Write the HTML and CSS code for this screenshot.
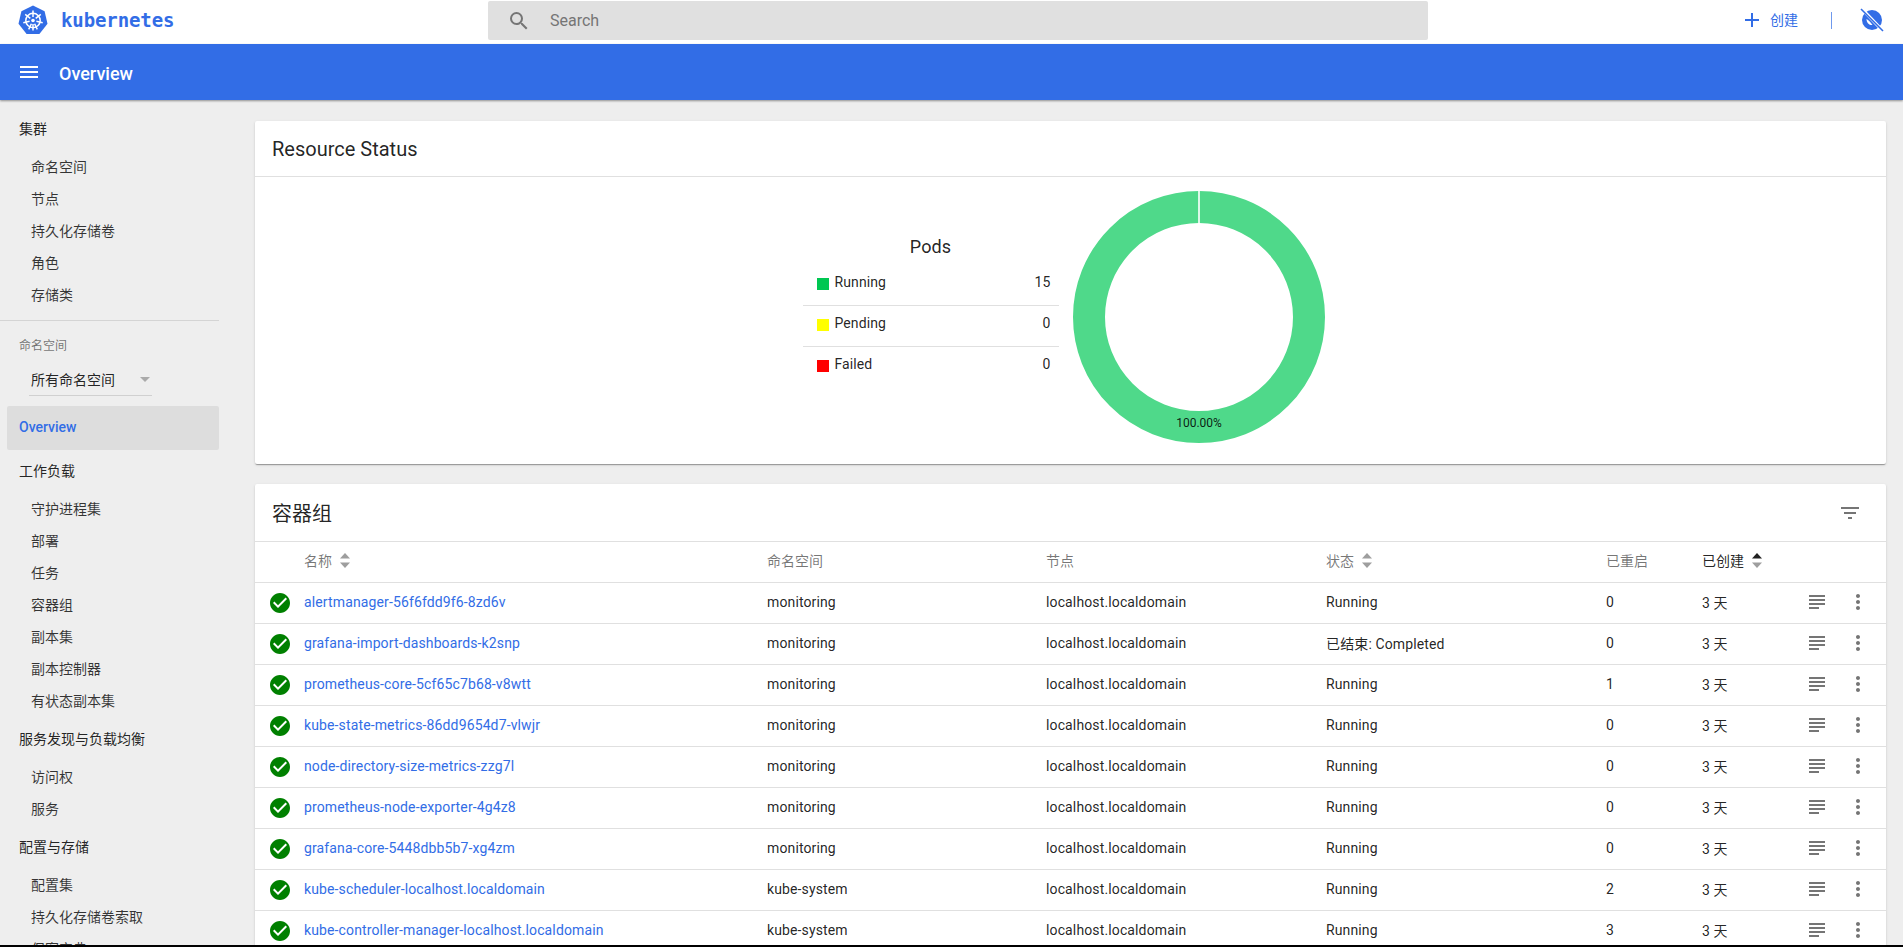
FILE: index.html
```html
<!DOCTYPE html>
<html lang="zh">
<head>
<meta charset="utf-8">
<title>Overview - Kubernetes Dashboard</title>
<link rel="stylesheet" href="styles.css">
</head>
<body>
<div class="page">
  <header class="toolbar">
    <div class="brand">
      <svg class="logo" viewBox="0 0 30 30" width="30" height="30">
        <path class="logo-hept" d="M15 .6 26.6 6.200 29.500 18.800 21.400 28.900H8.600L.5 18.800 3.400 6.200Z"/>
        <g class="logo-wheel">
          <circle cx="15" cy="15.500" r="7.200"/>
          <path d="M15 5.500V12M15 19V25.500M7.200 9.300 12.300 13.300M22.800 9.300 17.700 13.300M5.300 17.700 11.600 16.200M24.700 17.700 18.400 16.200M10.700 24.400 13.400 18.700M19.300 24.400 16.600 18.700"/>
          <circle class="logo-hub" cx="15" cy="15.500" r="1.800"/>
        </g>
      </svg>
      <span class="brand-name">kubernetes</span>
    </div>
    <div class="search">
      <svg class="icon search-icon" viewBox="0 0 24 24"><path d="M15.500 14h-.79l-.28-.27A6.470 6.470 0 0 0 16 9.500 6.500 6.500 0 1 0 9.500 16c1.610 0 3.090-.59 4.230-1.570l.27.28v.79l5 4.990L20.490 19l-4.990-5zm-6 0C7.010 14 5 11.990 5 9.500S7.010 5 9.500 5 14 7.010 14 9.500 11.990 14 9.500 14z"/></svg>
      <span class="search-text">Search</span>
    </div>
    <div class="actions">
      <svg class="icon plus-icon" viewBox="0 0 24 24"><path d="M19 13h-6v6h-2v-6H5v-2h6V5h2v6h6v2z"/></svg>
      <span class="create">创建</span>
      <span class="vdivider"></span>
      <svg class="icon avatar-icon" viewBox="0 0 24 24">
        <circle class="avatar-disc" cx="12" cy="12" r="10"/>
        <path class="avatar-cut" d="M6.500 11C8.500 12 11 14.500 12.500 17 9.500 17.500 6.500 15 6.500 11Z"/>
        <path class="avatar-halo" d="M2 1 23 23"/>
        <path class="avatar-strike" d="M1 1 23 23"/>
      </svg>
    </div>
  </header>
  <div class="titlebar">
    <svg class="icon menu-icon" viewBox="0 0 24 24"><path d="M3 18h18v-2H3v2zm0-5h18v-2H3v2zm0-7v2h18V6H3z"/></svg>
    <span class="page-title">Overview</span>
  </div>
  <div class="main">
    <nav class="sidebar">
      <div class="nav-title">集群</div>
      <div class="nav-item">命名空间</div>
      <div class="nav-item">节点</div>
      <div class="nav-item">持久化存储卷</div>
      <div class="nav-item">角色</div>
      <div class="nav-item">存储类</div>
      <div class="nav-divider"></div>
      <div class="ns-label">命名空间</div>
      <div class="ns-select"><span>所有命名空间</span><span class="ns-arrow"></span></div>
      <div class="nav-active">Overview</div>
      <div class="nav-title nav-title-first">工作负载</div>
      <div class="nav-item">守护进程集</div>
      <div class="nav-item">部署</div>
      <div class="nav-item">任务</div>
      <div class="nav-item">容器组</div>
      <div class="nav-item">副本集</div>
      <div class="nav-item">副本控制器</div>
      <div class="nav-item">有状态副本集</div>
      <div class="nav-title">服务发现与负载均衡</div>
      <div class="nav-item">访问权</div>
      <div class="nav-item">服务</div>
      <div class="nav-title">配置与存储</div>
      <div class="nav-item">配置集</div>
      <div class="nav-item">持久化存储卷索取</div>
      <div class="nav-item">保密字典</div>
    </nav>
    <main class="content">
      <section class="card">
        <div class="card-head"><h2 class="card-title">Resource Status</h2></div>
        <div class="chart-area">
          <div class="legend">
            <div class="legend-title">Pods</div>
            <div class="legend-row legend-first"><span class="swatch swatch-run"></span><span class="legend-label">Running</span><span>15</span></div>
            <div class="legend-row"><span class="swatch swatch-pend"></span><span class="legend-label">Pending</span><span>0</span></div>
            <div class="legend-row legend-last"><span class="swatch swatch-fail"></span><span class="legend-label">Failed</span><span>0</span></div>
          </div>
          <svg class="donut" viewBox="0 0 252 252" width="252" height="252">
            <circle class="donut-ring" cx="126" cy="126" r="110"/>
            <rect class="donut-gap" x="125.200" y="0" width="1.600" height="33"/>
            <text class="donut-label" x="126" y="236" text-anchor="middle">100.00%</text>
          </svg>
        </div>
      </section>
      <section class="card card-pods">
        <div class="card-head card-head-between">
          <h2 class="card-title">容器组</h2>
          <svg class="icon filter-icon" viewBox="0 0 24 24"><path d="M10 18h4v-2h-4v2zM3 6v2h18V6H3zm3 7h12v-2H6v2z"/></svg>
        </div>
        <div class="row row-head">
          <span></span>
          <span class="th">名称<svg class="sort" viewBox="0 0 10 15"><path d="M5 0 10 5.500H0Z"/><path d="M5 15 0 9.500H10Z"/></svg></span>
          <span class="th">命名空间</span>
          <span class="th">节点</span>
          <span class="th">状态<svg class="sort" viewBox="0 0 10 15"><path d="M5 0 10 5.500H0Z"/><path d="M5 15 0 9.500H10Z"/></svg></span>
          <span class="th">已重启</span>
          <span class="th th-on">已创建<svg class="sort sort-up" viewBox="0 0 10 15"><path class="sort-active" d="M5 0 10 5.500H0Z"/><path d="M5 15 0 9.500H10Z"/></svg></span>
          <span></span><span></span>
        </div>
        <div class="row"><svg class="check" viewBox="0 0 24 24"><path d="M12 2C6.480 2 2 6.480 2 12s4.480 10 10 10 10-4.480 10-10S17.520 2 12 2zm-2 15l-5-5 1.410-1.410L10 14.170l7.590-7.590L19 8l-9 9z"/></svg><a class="link">alertmanager-56f6fdd9f6-8zd6v</a><span>monitoring</span><span>localhost.localdomain</span><span>Running</span><span>0</span><span>3 天</span><svg class="icon logs" viewBox="0 0 24 24"><path d="M14 17H4v2h10v-2zm6-8H4v2h16V9zM4 15h16v-2H4v2zM4 5v2h16V5H4z"/></svg><svg class="icon more" viewBox="0 0 24 24"><path d="M12 8c1.100 0 2-.9 2-2s-.9-2-2-2-2 .9-2 2 .9 2 2 2zm0 2c-1.100 0-2 .9-2 2s.9 2 2 2 2-.9 2-2-.9-2-2-2zm0 6c-1.100 0-2 .9-2 2s.9 2 2 2 2-.9 2-2-.9-2-2-2z"/></svg></div>
        <div class="row"><svg class="check" viewBox="0 0 24 24"><path d="M12 2C6.480 2 2 6.480 2 12s4.480 10 10 10 10-4.480 10-10S17.520 2 12 2zm-2 15l-5-5 1.410-1.410L10 14.170l7.590-7.590L19 8l-9 9z"/></svg><a class="link">grafana-import-dashboards-k2snp</a><span>monitoring</span><span>localhost.localdomain</span><span>已结束: Completed</span><span>0</span><span>3 天</span><svg class="icon logs" viewBox="0 0 24 24"><path d="M14 17H4v2h10v-2zm6-8H4v2h16V9zM4 15h16v-2H4v2zM4 5v2h16V5H4z"/></svg><svg class="icon more" viewBox="0 0 24 24"><path d="M12 8c1.100 0 2-.9 2-2s-.9-2-2-2-2 .9-2 2 .9 2 2 2zm0 2c-1.100 0-2 .9-2 2s.9 2 2 2 2-.9 2-2-.9-2-2-2zm0 6c-1.100 0-2 .9-2 2s.9 2 2 2 2-.9 2-2-.9-2-2-2z"/></svg></div>
        <div class="row"><svg class="check" viewBox="0 0 24 24"><path d="M12 2C6.480 2 2 6.480 2 12s4.480 10 10 10 10-4.480 10-10S17.520 2 12 2zm-2 15l-5-5 1.410-1.410L10 14.170l7.590-7.590L19 8l-9 9z"/></svg><a class="link">prometheus-core-5cf65c7b68-v8wtt</a><span>monitoring</span><span>localhost.localdomain</span><span>Running</span><span>1</span><span>3 天</span><svg class="icon logs" viewBox="0 0 24 24"><path d="M14 17H4v2h10v-2zm6-8H4v2h16V9zM4 15h16v-2H4v2zM4 5v2h16V5H4z"/></svg><svg class="icon more" viewBox="0 0 24 24"><path d="M12 8c1.100 0 2-.9 2-2s-.9-2-2-2-2 .9-2 2 .9 2 2 2zm0 2c-1.100 0-2 .9-2 2s.9 2 2 2 2-.9 2-2-.9-2-2-2zm0 6c-1.100 0-2 .9-2 2s.9 2 2 2 2-.9 2-2-.9-2-2-2z"/></svg></div>
        <div class="row"><svg class="check" viewBox="0 0 24 24"><path d="M12 2C6.480 2 2 6.480 2 12s4.480 10 10 10 10-4.480 10-10S17.520 2 12 2zm-2 15l-5-5 1.410-1.410L10 14.170l7.590-7.590L19 8l-9 9z"/></svg><a class="link">kube-state-metrics-86dd9654d7-vlwjr</a><span>monitoring</span><span>localhost.localdomain</span><span>Running</span><span>0</span><span>3 天</span><svg class="icon logs" viewBox="0 0 24 24"><path d="M14 17H4v2h10v-2zm6-8H4v2h16V9zM4 15h16v-2H4v2zM4 5v2h16V5H4z"/></svg><svg class="icon more" viewBox="0 0 24 24"><path d="M12 8c1.100 0 2-.9 2-2s-.9-2-2-2-2 .9-2 2 .9 2 2 2zm0 2c-1.100 0-2 .9-2 2s.9 2 2 2 2-.9 2-2-.9-2-2-2zm0 6c-1.100 0-2 .9-2 2s.9 2 2 2 2-.9 2-2-.9-2-2-2z"/></svg></div>
        <div class="row"><svg class="check" viewBox="0 0 24 24"><path d="M12 2C6.480 2 2 6.480 2 12s4.480 10 10 10 10-4.480 10-10S17.520 2 12 2zm-2 15l-5-5 1.410-1.410L10 14.170l7.590-7.590L19 8l-9 9z"/></svg><a class="link">node-directory-size-metrics-zzg7l</a><span>monitoring</span><span>localhost.localdomain</span><span>Running</span><span>0</span><span>3 天</span><svg class="icon logs" viewBox="0 0 24 24"><path d="M14 17H4v2h10v-2zm6-8H4v2h16V9zM4 15h16v-2H4v2zM4 5v2h16V5H4z"/></svg><svg class="icon more" viewBox="0 0 24 24"><path d="M12 8c1.100 0 2-.9 2-2s-.9-2-2-2-2 .9-2 2 .9 2 2 2zm0 2c-1.100 0-2 .9-2 2s.9 2 2 2 2-.9 2-2-.9-2-2-2zm0 6c-1.100 0-2 .9-2 2s.9 2 2 2 2-.9 2-2-.9-2-2-2z"/></svg></div>
        <div class="row"><svg class="check" viewBox="0 0 24 24"><path d="M12 2C6.480 2 2 6.480 2 12s4.480 10 10 10 10-4.480 10-10S17.520 2 12 2zm-2 15l-5-5 1.410-1.410L10 14.170l7.590-7.590L19 8l-9 9z"/></svg><a class="link">prometheus-node-exporter-4g4z8</a><span>monitoring</span><span>localhost.localdomain</span><span>Running</span><span>0</span><span>3 天</span><svg class="icon logs" viewBox="0 0 24 24"><path d="M14 17H4v2h10v-2zm6-8H4v2h16V9zM4 15h16v-2H4v2zM4 5v2h16V5H4z"/></svg><svg class="icon more" viewBox="0 0 24 24"><path d="M12 8c1.100 0 2-.9 2-2s-.9-2-2-2-2 .9-2 2 .9 2 2 2zm0 2c-1.100 0-2 .9-2 2s.9 2 2 2 2-.9 2-2-.9-2-2-2zm0 6c-1.100 0-2 .9-2 2s.9 2 2 2 2-.9 2-2-.9-2-2-2z"/></svg></div>
        <div class="row"><svg class="check" viewBox="0 0 24 24"><path d="M12 2C6.480 2 2 6.480 2 12s4.480 10 10 10 10-4.480 10-10S17.520 2 12 2zm-2 15l-5-5 1.410-1.410L10 14.170l7.590-7.590L19 8l-9 9z"/></svg><a class="link">grafana-core-5448dbb5b7-xg4zm</a><span>monitoring</span><span>localhost.localdomain</span><span>Running</span><span>0</span><span>3 天</span><svg class="icon logs" viewBox="0 0 24 24"><path d="M14 17H4v2h10v-2zm6-8H4v2h16V9zM4 15h16v-2H4v2zM4 5v2h16V5H4z"/></svg><svg class="icon more" viewBox="0 0 24 24"><path d="M12 8c1.100 0 2-.9 2-2s-.9-2-2-2-2 .9-2 2 .9 2 2 2zm0 2c-1.100 0-2 .9-2 2s.9 2 2 2 2-.9 2-2-.9-2-2-2zm0 6c-1.100 0-2 .9-2 2s.9 2 2 2 2-.9 2-2-.9-2-2-2z"/></svg></div>
        <div class="row"><svg class="check" viewBox="0 0 24 24"><path d="M12 2C6.480 2 2 6.480 2 12s4.480 10 10 10 10-4.480 10-10S17.520 2 12 2zm-2 15l-5-5 1.410-1.410L10 14.170l7.590-7.590L19 8l-9 9z"/></svg><a class="link">kube-scheduler-localhost.localdomain</a><span>kube-system</span><span>localhost.localdomain</span><span>Running</span><span>2</span><span>3 天</span><svg class="icon logs" viewBox="0 0 24 24"><path d="M14 17H4v2h10v-2zm6-8H4v2h16V9zM4 15h16v-2H4v2zM4 5v2h16V5H4z"/></svg><svg class="icon more" viewBox="0 0 24 24"><path d="M12 8c1.100 0 2-.9 2-2s-.9-2-2-2-2 .9-2 2 .9 2 2 2zm0 2c-1.100 0-2 .9-2 2s.9 2 2 2 2-.9 2-2-.9-2-2-2zm0 6c-1.100 0-2 .9-2 2s.9 2 2 2 2-.9 2-2-.9-2-2-2z"/></svg></div>
        <div class="row"><svg class="check" viewBox="0 0 24 24"><path d="M12 2C6.480 2 2 6.480 2 12s4.480 10 10 10 10-4.480 10-10S17.520 2 12 2zm-2 15l-5-5 1.410-1.410L10 14.170l7.590-7.590L19 8l-9 9z"/></svg><a class="link">kube-controller-manager-localhost.localdomain</a><span>kube-system</span><span>localhost.localdomain</span><span>Running</span><span>3</span><span>3 天</span><svg class="icon logs" viewBox="0 0 24 24"><path d="M14 17H4v2h10v-2zm6-8H4v2h16V9zM4 15h16v-2H4v2zM4 5v2h16V5H4z"/></svg><svg class="icon more" viewBox="0 0 24 24"><path d="M12 8c1.100 0 2-.9 2-2s-.9-2-2-2-2 .9-2 2 .9 2 2 2zm0 2c-1.100 0-2 .9-2 2s.9 2 2 2 2-.9 2-2-.9-2-2-2zm0 6c-1.100 0-2 .9-2 2s.9 2 2 2 2-.9 2-2-.9-2-2-2z"/></svg></div>
      </section>
    </main>
  </div>
  <div class="screen-edge"></div>
</div>
</body>
</html>
```
FILE: styles.css
```css
* { box-sizing: border-box; }
html, body { margin: 0; height: 100%; overflow: hidden; }
body {
  font-family: Roboto, "Noto Sans CJK SC", sans-serif;
  font-size: 14px;
  color: rgba(0, 0, 0, .87);
  background: #eee;
}
.page { height: 100vh; display: flex; flex-direction: column; overflow: hidden; }
.icon { display: block; width: 24px; height: 24px; flex: none; fill: #757575; }

/* top toolbar */
.toolbar {
  flex: none;
  height: 44px;
  background: #fff;
  display: grid;
  grid-template-columns: 488px 940px 1fr;
  align-items: start;
}
.brand { display: flex; align-items: center; height: 40px; padding-left: 18px; gap: 13px; }
.logo { flex: none; }
.logo-hept { fill: #326de6; }
.logo-wheel { fill: none; stroke: #fff; stroke-width: 1.5; }
.logo-hub { fill: #fff; stroke: none; }
.brand-name {
  font-family: "DejaVu Sans Mono", monospace;
  font-size: 19px;
  font-weight: 700;
  color: #326de6;
  letter-spacing: -.1px;
}
.search {
  height: 39px;
  margin-top: 1px;
  background: #e0e0e0;
  border-radius: 2px;
  display: flex;
  align-items: center;
  padding-left: 19px;
}
.search-text { margin-left: 19px; font-size: 16px; color: #757575; }
.actions { display: flex; align-items: center; height: 40px; padding-left: 312px; }
.plus-icon, .avatar-icon { fill: #326de6; }
.create { margin: -2px 0 0 6px; color: #326de6; }
.vdivider { width: 1px; height: 17px; margin-left: 33px; background: #326de6; opacity: .7; }
.avatar-icon { margin-left: 28px; }
.avatar-cut { fill: #fff; }
.avatar-halo { stroke: #fff; stroke-width: 3.200; fill: none; }
.avatar-strike { stroke: #326de6; stroke-width: 1.600; fill: none; }

/* blue title bar */
.titlebar {
  flex: none;
  height: 56px;
  background: #326de6;
  display: flex;
  align-items: center;
  padding-left: 17px;
  box-shadow: 0 1px 2px rgba(0, 0, 0, .4);
  position: relative;
  z-index: 1;
}
.menu-icon { fill: #fff; }
.page-title { margin: 2px 0 0 18px; color: #fff; font-size: 18px; font-weight: 500; }

.main { flex: 1; min-height: 0; display: flex; overflow: hidden; }

/* side navigation */
.sidebar { flex: none; width: 240px; padding-top: 13px; overflow: hidden; }
.nav-title { height: 32px; line-height: 32px; padding-left: 19px; margin: 6px 0; }
.sidebar > .nav-title:first-child { margin-top: 0; }
.nav-title-first { margin-top: 5px; }
.nav-item { height: 32px; line-height: 32px; padding-left: 31px; color: rgba(0, 0, 0, .78); }
.nav-divider { width: 219px; height: 1px; margin-top: 9px; background: #d4d4d4; }
.ns-label { height: 48px; line-height: 50px; padding-left: 19px; font-size: 12px; color: rgba(0, 0, 0, .54); }
.ns-select {
  width: 123px;
  height: 27px;
  margin-left: 29px;
  padding-left: 2px;
  line-height: 22px;
  border-bottom: 1px solid #d0d0d0;
  display: flex;
  justify-content: space-between;
}
.ns-arrow {
  width: 0;
  height: 0;
  margin: 8px 2px 0 0;
  border-left: 5px solid transparent;
  border-right: 5px solid transparent;
  border-top: 5px solid #aaa;
}
.nav-active {
  width: 212px;
  height: 44px;
  margin: 10px 0 0 7px;
  padding-left: 12px;
  line-height: 43px;
  background: #ddd;
  border-radius: 2px;
  color: #326de6;
  font-weight: 500;
}

/* content */
.content { flex: 1; min-width: 0; padding: 21px 17px 0 15px; overflow: hidden; }
.card {
  background: #fff;
  border-radius: 2px;
  box-shadow: 0 2px 1px -1px rgba(0, 0, 0, .2), 0 1px 1px rgba(0, 0, 0, .14), 0 1px 3px rgba(0, 0, 0, .12);
}
.card-pods { margin-top: 20px; }
.card-head {
  height: 56px;
  padding: 0 26px 0 17px;
  display: flex;
  align-items: center;
  border-bottom: 1px solid #e0e0e0;
}
.card-head-between { height: 58px; justify-content: space-between; }
.card-title { margin: 0; font-size: 20px; font-weight: 400; }

/* chart */
.chart-area {
  height: 287px;
  padding: 14px 14px 0 0;
  display: flex;
  justify-content: center;
  align-items: flex-start;
  gap: 14px;
}
.legend { width: 256px; margin-top: 44px; letter-spacing: .1px; }
.legend-title { height: 31px; line-height: 24px; font-size: 18px; text-align: center; }
.legend-row {
  display: flex;
  padding: 7px 8px 13px 14px;
  line-height: 20px;
  border-bottom: 1px solid #e0e0e0;
}
.legend-first { padding-top: 6px; }
.legend-last { border-bottom: 0; }
.legend-label { flex: 1; }
.swatch { width: 12px; height: 12px; margin: 6px 6px 0 0; }
.swatch-run { background: #00c752; }
.swatch-pend { background: #ff0; }
.swatch-fail { background: #f00; }
.donut { flex: none; display: block; }
.donut-ring { fill: none; stroke: #4fd98a; stroke-width: 32; }
.donut-gap { fill: #fff; }
.donut-label { font-size: 12px; fill: rgba(0, 0, 0, .87); }

/* pods table */
.row {
  height: 41px;
  padding-bottom: 2px;
  display: grid;
  grid-template-columns: 49px 463px 279px 280px 280px 96px 107px 49px 1fr;
  align-items: center;
  border-bottom: 1px solid #e0e0e0;
  white-space: nowrap;
  letter-spacing: .13px;
}
.row-head { padding-bottom: 4px; }
.th { display: flex; align-items: center; gap: 8px; color: rgba(0, 0, 0, .54); letter-spacing: 0; }
.th-on { color: rgba(0, 0, 0, .87); }
.sort { width: 10px; height: 15px; fill: #9e9e9e; }
.sort-active { fill: #212121; }
.check { display: block; width: 24px; height: 24px; margin: 2px 0 0 13px; fill: #008000; }
.link { color: #326de6; }
.logs { margin-left: -4px; }
.more { margin-left: -12px; }
.filter-icon { margin-right: -2px; }

.screen-edge { flex: none; height: 2px; background: #000; }
```
